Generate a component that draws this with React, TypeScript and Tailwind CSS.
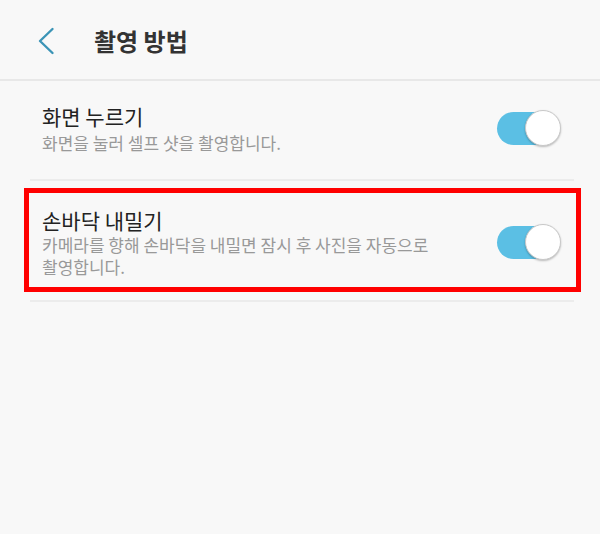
import React from "react";

function Toggle() {
  return (
    <div className="relative w-[64px] h-[36px] shrink-0">
      <div className="absolute left-0 top-[1.5px] h-[33px] w-[54px] rounded-full bg-[#5bbfe4]" />
      <div className="absolute right-0 top-0 h-[36px] w-[36px] rounded-full bg-white border border-[#c9c9c9] shadow-[0_1px_2px_rgba(0,0,0,0.25)]" />
    </div>
  );
}

export default function App() {
  return (
    <div
      className="w-[600px] h-[534px] bg-[#f8f8f8] overflow-hidden"
      style={{ fontFamily: '"Noto Sans CJK KR", "Noto Sans", sans-serif' }}
    >
      <div className="h-[81px] pt-[2px] flex items-center border-b-2 border-[#e8e8e8]">
        <svg className="ml-[36px]" width="20" height="30" viewBox="0 0 20 30" fill="none">
          <path d="M16.5 3 L4 15 L16.5 27" stroke="#3b94b6" strokeWidth="2.4" strokeLinecap="round" strokeLinejoin="round" />
        </svg>
        <div className="ml-[38px] text-[24px] leading-[32px] font-bold text-[#333333]">촬영 방법</div>
      </div>
      <div className="ml-[30px] mr-[26px]">
        <div className="flex items-center justify-between pl-[12px] pr-[13px] pt-[21px] pb-[25px] border-b-2 border-[#ececec]">
          <div className="flex flex-col gap-[2px]">
            <div className="text-[21px] leading-[28px] text-[#222222]">화면 누르기</div>
            <div className="text-[17px] leading-[22px] text-[#999999]">화면을 눌러 셀프 샷을 촬영합니다.</div>
          </div>
          <Toggle />
        </div>
        <div className="pt-[7px] pb-[8px] border-b-2 border-[#ececec]">
          <div className="-ml-[6px] -mr-[7px] border-[5px] border-[#ff0000] flex items-center justify-between pl-[13px] pr-[15px] pt-[13px] pb-[9px]">
            <div className="flex flex-col max-w-[430px] break-keep">
              <div className="text-[21px] leading-[28px] text-[#222222]">손바닥 내밀기</div>
              <div className="text-[17px] leading-[22px] text-[#999999]">
                카메라를 향해 손바닥을 내밀면 잠시 후 사진을 자동으로 촬영합니다.
              </div>
            </div>
            <Toggle />
          </div>
        </div>
      </div>
    </div>
  );
}
